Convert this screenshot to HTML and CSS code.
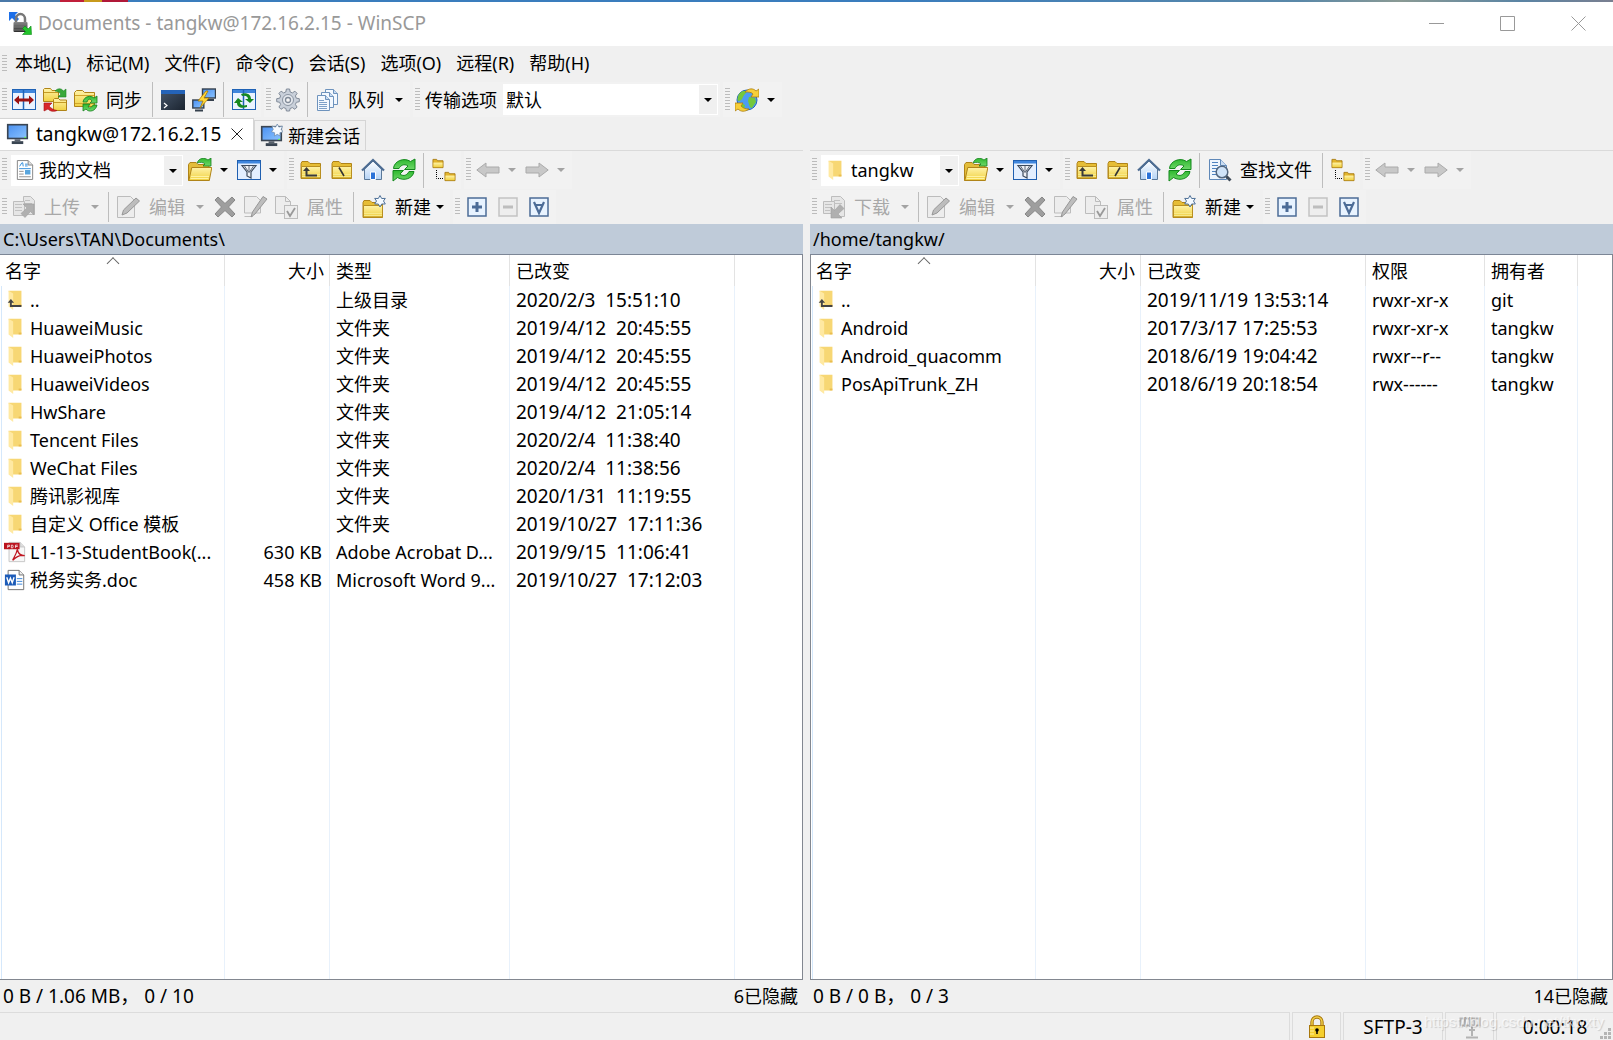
FILE: index.html
```html
<!DOCTYPE html>
<html lang="zh-CN">
<head>
<meta charset="utf-8">
<title>Documents - tangkw@172.16.2.15 - WinSCP</title>
<link rel="stylesheet" href="styles.css">
</head>
<body>
<svg class="sprite" width="0" height="0" aria-hidden="true">
  <defs>
    <linearGradient id="gold" x1="0" y1="0" x2="0" y2="1"><stop offset="0" stop-color="#fff3a8"/><stop offset="1" stop-color="#f0d040"/></linearGradient>
    <linearGradient id="screen" x1="0" y1="0" x2="1" y2="1"><stop offset="0" stop-color="#4a90f0"/><stop offset="1" stop-color="#8cc4ff"/></linearGradient>
    <linearGradient id="green" x1="0" y1="0" x2="0" y2="1"><stop offset="0" stop-color="#2eb82e"/><stop offset="1" stop-color="#6fd86a"/></linearGradient>
    <linearGradient id="metal" x1="0" y1="0" x2="0" y2="1"><stop offset="0" stop-color="#8a8a8a"/><stop offset="1" stop-color="#2b2b2b"/></linearGradient>
    <linearGradient id="wall" x1="0" y1="0" x2="0" y2="1"><stop offset="0" stop-color="#ffffff"/><stop offset="1" stop-color="#b5d3f5"/></linearGradient>
    <linearGradient id="term" x1="0" y1="0" x2="1" y2="1"><stop offset="0" stop-color="#46566a"/><stop offset="1" stop-color="#1b2430"/></linearGradient>
  </defs>
  <symbol id="i-folder" viewBox="0 0 24 24">
    <path d="M2 20.500V5.500l1-2h6l2 2h10.500v15z" fill="#e6bd35" stroke="#b08418"/>
    <path d="M2.500 8.500h19v11.500h-19z" fill="url(#gold)" stroke="#b98f20"/><path d="M3 16.500h18M3 18.500h18" stroke="#f7e98a"/>
  </symbol>
  <symbol id="i-small-folder" viewBox="0 0 12 12"><path d="M.5 10.500v-9h4l1 1.500h6v7.500z" fill="#e3b52c" stroke="#a87c12"/><path d="M1 5h10v5H1z" fill="url(#gold)"/></symbol>
  <symbol id="i-app" viewBox="0 0 24 24">
    <path d="M1 1h9L7 4l4 4-3 3-4-4-3 3z" fill="#1d6fe8"/>
    <path d="M8 12V8a4.500 5 0 0 1 9 0v4" fill="none" stroke="#777" stroke-width="2.500"/><rect x="5.500" y="11" width="14" height="10" rx="1" fill="url(#metal)"/><path d="M6 13h13M6 16h13M6 19h13" stroke="#777"/>
    <path d="M23.500 23.500h-9l3-3-3-3 2.500-2.500 3 3 3-3z" fill="#22c32b" stroke="#0d8a18" stroke-width=".6"/>
  </symbol>
  <symbol id="i-compare" viewBox="0 0 24 24">
    <rect x=".5" y="1.500" width="23" height="20" fill="#eaf3ff" stroke="#1f62b5"/><path d="M1 2h22v3H1z" fill="#3f86dd"/><path d="M11.500 2v19" stroke="#1f62b5" stroke-width="1.500"/>
    <path d="M2 12l5-4.500v3h10v-3l5 4.500-5 4.500v-3H7v3z" fill="#9c1212"/>
  </symbol>
  <symbol id="i-syncfolders" viewBox="0 0 24 24">
    <path d="M.5 13.500v-12l1-1h6l1.500 2h6.500v11z" fill="url(#gold)" stroke="#b08418"/><path d="M1 4.500h14" stroke="#c49a25"/>
    <path d="M10.500 22.500v-11l1-1h4l1.500 1.500h6.500v10.500z" fill="url(#gold)" stroke="#b08418"/><path d="M11 14.500h12" stroke="#c49a25"/>
    <path d="M12 3c3-3 6-3 8.500 0L23 1v8h-8l3-3c-2-2-4-3-6-3z" fill="#3aa83a" stroke="#1f8526" stroke-width=".6"/>
    <path d="M14 22.500c-3 1.500-7 1-9-1.500l-4 2v-8h8l-3 3c2 2 4 4 8 4.500z" fill="#d8262a" stroke="#a81216" stroke-width=".6"/>
  </symbol>
  <symbol id="i-syncrefresh" viewBox="0 0 24 24">
    <path d="M.5 18.500v-14l2-2h6l2 2h10v14z" fill="url(#gold)" stroke="#b08418"/><path d="M1 7.500h19M1 15.500h19" stroke="#d0a52c"/>
    <path d="M9 14c1-6 8-7 11-4l3-2v7h-7l2-2c-2-3-4-2-5 1z" fill="url(#green)" stroke="#168020" stroke-width=".8"/><path d="M23 17c-1 6-8 8-11 4l-3 2v-7h7l-2 3c2 2 4 0 5-2z" fill="url(#green)" stroke="#168020" stroke-width=".8"/>
  </symbol>
  <symbol id="i-terminal" viewBox="0 0 24 24"><rect y="2" width="24" height="20" fill="url(#term)"/><path d="M0 2h24v4H0z" fill="#2463b8"/><path d="M3 15l3 2.500-3 2.500" fill="none" stroke="#fff" stroke-width="1.200"/></symbol>
  <symbol id="i-putty" viewBox="0 0 24 24">
    <rect x="10.500" y="1" width="13" height="9" fill="url(#screen)" stroke="#35404d" stroke-width="1.400"/><path d="M15 12h7" stroke="#35404d" stroke-width="2"/>
    <rect x=".8" y="12" width="11" height="8" fill="url(#screen)" stroke="#35404d" stroke-width="1.400"/><path d="M3 22.500h8" stroke="#35404d" stroke-width="2"/>
    <path d="M14 3L6 13h5l-3 7 9-10h-5l4-7z" fill="#ffd83a" stroke="#a97800" stroke-width=".8"/>
  </symbol>
  <symbol id="i-syncbrowse" viewBox="0 0 24 24">
    <rect x=".5" y="1.500" width="23" height="20" fill="#eaf3ff" stroke="#1f62b5"/><path d="M1 2h22v3H1z" fill="#3f86dd"/><path d="M11.500 2v19" stroke="#1f62b5" stroke-width="1.500"/>
    <path d="M9 6c5-2 10 0 10 5h3l-4 4-5-4h3c0-2-2-4-6-3z" fill="#168820"/><path d="M15 19c-6 2-10 0-10-4H2l4-5 5 4H8c0 3 3 4 7 3z" fill="#168820"/>
  </symbol>
  <symbol id="i-gear" viewBox="0 0 24 24">
    <path d="M10.400 1h3.200l.6 3 2.200.9 2.500-1.700 2.200 2.200-1.700 2.500.9 2.300 3 .5v3l-3 .6-.9 2.200 1.700 2.500-2.200 2.300-2.500-1.700-2.300.9-.5 2.500h-3.200l-.5-2.500-2.300-.9L5 21.300 2.900 19l1.700-2.500-.9-2.200-3-.6v-3l3-.5.9-2.300-1.700-2.500 2.200-2.200 2.500 1.700 2.200-.9z" fill="#c9d0da" stroke="#808a98"/>
    <circle cx="12" cy="12" r="5.500" fill="#e4e8ee" stroke="#8a94a2"/><circle cx="12" cy="12" r="2.500" fill="#f5f5f5" stroke="#808a98" stroke-width="1.300"/>
  </symbol>
  <symbol id="i-queue" viewBox="0 0 24 24">
    <g fill="#f3f8fe" stroke="#6e93bd"><path d="M9.500 1.500h8l4 4v11h-12z"/><path d="M17.500 1.500v4h4" fill="#c5daf2"/><path d="M5.500 4.500h8l4 4v11h-12z"/><path d="M13.500 4.500v4h4" fill="#c5daf2"/><path d="M1.500 7.500h8l4 4v11h-12z"/><path d="M9.500 7.500v4h4" fill="#c5daf2"/></g>
    <path d="M3 12.500h5M3 14.500h8M3 16.500h8M3 18.500h8M3 20.500h8" stroke="#7da0c8"/>
  </symbol>
  <symbol id="i-globe" viewBox="0 0 24 24">
    <circle cx="12" cy="12" r="10" fill="#4d9cf2" stroke="#2468b8"/><path d="M4 6c3-4 6-3 8-3-1 3-3 3-4 6s-3 4-5 4c-1-2 0-5 1-7zM14 9l6 1 1 4-4 6c-3 0-3-5-4-7zM6 15l4 2-1 4-4-3z" fill="#74c83c"/>
    <path d="M10 4c4-4 8-4 11-1l3-2v8h-8l2-3c-2-2-4-2-8-2z" fill="#f7cf3a" stroke="#ad7f0d" stroke-width=".8"/><path d="M14 21c-4 3-8 3-11 0l-3 2v-8h8l-2 3c2 2 4 3 8 3z" fill="#f7cf3a" stroke="#ad7f0d" stroke-width=".8"/>
  </symbol>
  <symbol id="i-monitor" viewBox="0 0 24 24"><rect x="1.800" y="2.800" width="20.400" height="14.400" fill="url(#screen)" stroke="#3a4552" stroke-width="1.700"/><path d="M9 18h6v2H9z" fill="#59616c"/><path d="M6 21.500h12" stroke="#3a4552" stroke-width="3"/><path d="M19 16h2" stroke="#6f3" /></symbol>
  <symbol id="i-newmonitor" viewBox="0 0 24 24"><use href="#i-monitor"/><path d="M18 0l1.700 3.200 3.800-1-1.300 3.500L24 8l-3.300 1.200.3 3.300-3-1.700-3 1.700.3-3.300L12 8l1.800-2.300-1.300-3.500 3.800 1z" fill="#f5faff" stroke="#6f8cab" stroke-width=".8"/></symbol>
  <symbol id="i-openfolder" viewBox="0 0 24 24">
    <path d="M.5 22.500V6.500l1.500-2h6l2 2h11v16z" fill="#e3bd3a" stroke="#b08418"/><path d="M.8 22.500l3-13h20l-2.500 13z" fill="url(#gold)" stroke="#b08418"/><path d="M3 18.500h18M2.500 20.500h18" stroke="#fff3a0"/>
    <path d="M9 5c2-5 7-6 11-3l3-2v8h-8l2-2c-2-2-5-2-8-1z" fill="url(#green)" stroke="#168020" stroke-width=".8"/>
  </symbol>
  <symbol id="i-filter" viewBox="0 0 24 24"><rect x=".5" y="2.500" width="23" height="19" fill="#e3efff" stroke="#1f5fb0"/><path d="M1 3h22v2.500H1z" fill="#3f86dd"/><path d="M5 7.500h14l-5 6.500v6l-4-2v-4z" fill="#eef1f5" stroke="#3c4a5c" stroke-width="1.200"/><path d="M7.500 8l4 6M12 8v7M16.500 8l-4 6" stroke="#3c4a5c" stroke-width=".8"/></symbol>
  <symbol id="i-upfolder" viewBox="0 0 24 24"><use href="#i-folder"/><path d="M7.500 12v5.500H18" fill="none" stroke="#3a3a3a" stroke-width="2"/><path d="M4 13l3.500-4L11 13z" fill="#3a3a3a"/></symbol>
  <symbol id="i-rootlocal" viewBox="0 0 24 24"><use href="#i-folder"/><path d="M9 9.500l5 8.500" stroke="#333" stroke-width="1.600"/></symbol>
  <symbol id="i-rootremote" viewBox="0 0 24 24"><use href="#i-folder"/><path d="M14 9.500L9 18" stroke="#333" stroke-width="1.600"/></symbol>
  <symbol id="i-home" viewBox="0 0 24 24"><path d="M3.500 11L12 3l8.500 8v10.500h-17z" fill="url(#wall)" stroke="#5a7898"/><path d="M1 12.500L12 2l11 10.500" fill="none" stroke="#4d6c92" stroke-width="2.200"/><path d="M9.500 14h5v7.500h-5z" fill="#2a72d8" stroke="#fff"/></symbol>
  <symbol id="i-refresh" viewBox="0 0 24 24"><path d="M1.500 10.500C2 3 12-1 18.500 3.500L23 1v10.500H12.500l3.500-3.500c-4-3-8 0-9 2.500z" fill="url(#green)" stroke="#13881c"/><path d="M22 13.500c-1 7-10 10-16.500 6L1 23V12.500h10.500L8 16c4 3 7 1 9-2.500z" fill="url(#green)" stroke="#13881c"/></symbol>
  <symbol id="i-tree" viewBox="0 0 24 24"><use href="#i-small-folder" width="12" height="11"/><use href="#i-small-folder" x="12" y="13" width="12" height="11"/><path d="M4.500 12v8.500H12" fill="none" stroke="#000" stroke-dasharray="1 1"/></symbol>
  <symbol id="i-back" viewBox="0 0 24 24"><path d="M.8 12L10 5v4h13v6H10v4z" fill="#c8c8c8" stroke="#aaa"/></symbol>
  <symbol id="i-forward" viewBox="0 0 24 24"><path d="M23.200 12L14 5v4H1v6h13v4z" fill="#c8c8c8" stroke="#aaa"/></symbol>
  <symbol id="i-find" viewBox="0 0 24 24"><path d="M1.500 1.500h11l6 6v14h-17z" fill="#eef5fd" stroke="#5f88b8"/><path d="M12.500 1.500v6h6" fill="#c9dcf2" stroke="#5f88b8"/><path d="M4 4.500h6M4 7.500h6M4 10.500h5M4 13.500h4M4 16.500h5" stroke="#4f83c0"/><circle cx="14" cy="14" r="5.800" fill="#cfe3f8" stroke="#52667e" stroke-width="1.500"/><path d="M18.500 18.500l4 4" stroke="#3e4a58" stroke-width="3"/></symbol>
  <symbol id="i-upload" viewBox="0 0 24 24"><g fill="#e6e6e6" stroke="#bdbdbd"><path d="M11.500 1.500h7l4 4v14h-11z"/><path d="M1.500 6.500h11v14h-11z"/></g><path d="M3 9.500h7M3 12.500h7M3 15.500h7M13 5.500h5M13 8.500h7" stroke="#c2c2c2"/><path d="M22 9v11l-3.500-3.500L13 22.500l-4-4 6-5.500L11 9z" fill="#b0b0b0" stroke="#a0a0a0" stroke-width=".6"/></symbol>
  <symbol id="i-download" viewBox="0 0 24 24"><g fill="#e6e6e6" stroke="#bdbdbd"><path d="M9.500 1.500h9l4 4v16h-13z"/><path d="M1.500 6.500h11v12h-11z"/></g><path d="M3 9.500h7M3 12.500h7M3 15.500h5M12 5.500h6M12 8.500h8" stroke="#c2c2c2"/><path d="M9 23V12l3.500 3.500L18 9.500l4 4-6 5.500 4 4z" fill="#b0b0b0" stroke="#a0a0a0" stroke-width=".6"/></symbol>
  <symbol id="i-edit" viewBox="0 0 24 24"><path d="M.5 1.500h13l4 4v17H.500z" fill="#ededed" stroke="#bcbcbc"/><path d="M5 20l1.500-5L19 3l3.500 3L10 18z" fill="#bdbdbd" stroke="#979797"/></symbol>
  <symbol id="i-rename" viewBox="0 0 24 24"><path d="M.500 18V1.500h12l4 4V18zM.500 21.500H9" fill="#ededed" stroke="#bcbcbc"/><path d="M7 22l1.500-5L19 1.500l4 2.500L11 19z" fill="#bdbdbd" stroke="#979797"/></symbol>
  <symbol id="i-delete" viewBox="0 0 24 24"><path d="M5 2l7 6.500L19 2l3 3-6.500 7 6.500 7-3 3-7-6.500L5 22l-3-3 6.500-7L2 5z" fill="#9e9e9e" stroke="#878787"/></symbol>
  <symbol id="i-props" viewBox="0 0 24 24"><path d="M.5 1.500h10l5 5v12H.500z" fill="#ededed" stroke="#bcbcbc"/><path d="M10.500 1.500v5h5" fill="none" stroke="#bcbcbc"/><rect x="9.500" y="10.500" width="13" height="13" fill="#ededed" stroke="#bcbcbc"/><path d="M12 16l3 5 5-8" fill="none" stroke="#999" stroke-width="1.800"/></symbol>
  <symbol id="i-newfolder" viewBox="0 0 24 24"><use href="#i-folder" x="-1" y="2"/><path d="M18 .5l1.700 3 3.600-.1L21.500 6l1.800 3h-3.600L18 12l-1.700-3h-3.600l1.800-3-1.800-2.600 3.600.1z" fill="#f5faff" stroke="#4f7198"/></symbol>
  <symbol id="i-plus" viewBox="0 0 20 20"><rect x="1" y="1" width="18" height="18" fill="#e8f3ff" stroke="#4c6c97" stroke-width="1.500"/><path d="M10 5v10M5 10h10" stroke="#4c6c97" stroke-width="3"/></symbol>
  <symbol id="i-minus" viewBox="0 0 20 20"><rect x="1" y="1" width="18" height="18" fill="#eee" stroke="#c3c3c3" stroke-width="1.500"/><path d="M5 10h10" stroke="#bdbdbd" stroke-width="3"/></symbol>
  <symbol id="i-invert" viewBox="0 0 20 20"><rect x="1" y="1" width="18" height="18" fill="#e8f3ff" stroke="#4c6c97" stroke-width="1.500"/><path d="M5 5l5 11 5-11M6.500 8h7" fill="none" stroke="#4c6c97" stroke-width="2.200"/></symbol>
  <symbol id="i-docs" viewBox="0 0 20 24"><path d="M1.500 1.500h12l5 5v16h-17z" fill="#fff" stroke="#7d7d7d"/><path d="M13.500 1.500v5h5" fill="#ddd" stroke="#7d7d7d"/><path d="M4 8l2.500-4h1L8 8M10 5.500h3M10 7.500h3M3.500 10.500h13" fill="none" stroke="#2384d8"/><path d="M3.500 13.500h5M3.500 16.500h5M3.500 19.500h13" stroke="#888"/><rect x="10" y="12" width="6" height="5" fill="#58a5dd"/></symbol>
  <symbol id="i-dir" viewBox="0 0 16 24"><path d="M1 2h14v17H5z" fill="#f7d774"/><path d="M1 2l5 3v18l-5-4z" fill="#ffe9a2"/><path d="M12 17h3v2h-3z" fill="#e9bd50"/></symbol>
  <symbol id="i-dirup" viewBox="0 0 16 24"><use href="#i-dir"/><path d="M3.500 13v5.500H15" fill="none" stroke="#444" stroke-width="2"/><path d="M0 15l3.500-4L7 15z" fill="#444"/></symbol>
  <symbol id="i-pdf" viewBox="0 0 24 24"><path d="M5.500 1.500h12l5 5v16h-17z" fill="#f7f7f7" stroke="#c4c4c4"/><path d="M17.500 1.500v5h5" fill="#ddd" stroke="#c4c4c4"/><path d="M0 2h17v7H0z" fill="#bb1420"/><path d="M4 7.500v-3h2v1.500H4M8 4.500v3h1.500l.5-1.500-.5-1.500zM12.500 7.500v-3H15M12.500 6H15" fill="none" stroke="#fff" stroke-width=".8"/><path d="M9.500 21c1-3 4-6 5-12 1 5 4 7 8 7-4-1-8 0-13 5z" fill="none" stroke="#c01722" stroke-width="1.400"/></symbol>
  <symbol id="i-word" viewBox="0 0 24 24"><path d="M4.500 1.500h12l5 5v16h-17z" fill="#fff" stroke="#6b6b6b"/><path d="M16.500 1.500v5h5" fill="#eee" stroke="#6b6b6b"/><path d="M14 10.500h6M14 13.500h6M14 16.500h6" stroke="#2f7fd6"/><path d="M1 6h12v12H1z" fill="#1b5bb8"/><path d="M3 9l2 6 2-5 2 5 2-6" fill="none" stroke="#fff" stroke-width="1.500"/></symbol>
  <symbol id="i-lock" viewBox="0 0 18 24"><path d="M4 11V7a5 5 0 0 1 10 0v4" fill="none" stroke="#a9780c" stroke-width="3.400"/><path d="M4 11V7a5 5 0 0 1 10 0v4" fill="none" stroke="#f1cf4a" stroke-width="1.400"/><rect x="1.500" y="10.500" width="15" height="12" fill="#f5cf2e" stroke="#a9780c"/><path d="M2 13h4M2 16h4M2 19h4" stroke="#fff0a0"/><circle cx="9" cy="15" r="1.800"/><path d="M9 15v4" stroke="#000" stroke-width="1.500"/></symbol>
  <symbol id="i-zip" viewBox="0 0 22 24"><path d="M1.500 3.500h14v7h-14zM17 3.500h3.500v7H17M6 2v10M11 2v10M13 11v10M7 22.500h12M10 15h6" fill="none" stroke="#b3b3b3" stroke-width="2"/></symbol>
</svg>

<div class="desktop-strip"></div>
<header class="titlebar">
  <svg class="icon"><use href="#i-app"/></svg>
  <h1>Documents - tangkw@172.16.2.15 - WinSCP</h1>
  <button class="caption" aria-label="最小化"><svg viewBox="0 0 16 16"><path d="M0 7.500h15"/></svg></button>
  <button class="caption" aria-label="最大化"><svg viewBox="0 0 16 16"><path d="M.5.500h14v14H.500z"/></svg></button>
  <button class="caption" aria-label="关闭"><svg viewBox="0 0 16 16"><path d="M.5.500l14 14M14.500.500l-14 14"/></svg></button>
</header>

<nav class="menubar">
  <span class="grip"></span>
  <button>本地(L)</button><button>标记(M)</button><button>文件(F)</button><button>命令(C)</button><button>会话(S)</button><button>选项(O)</button><button>远程(R)</button><button>帮助(H)</button>
</nav>

<div class="toolbar main">
  <div class="group">
    <span class="grip"></span>
    <button class="tool" aria-label="比较目录"><svg class="icon"><use href="#i-compare"/></svg></button>
    <button class="tool" aria-label="同步目录"><svg class="icon"><use href="#i-syncfolders"/></svg></button>
    <button class="tool labelled"><svg class="icon"><use href="#i-syncrefresh"/></svg>同步</button>
    <span class="sep"></span>
    <button class="tool" aria-label="终端"><svg class="icon"><use href="#i-terminal"/></svg></button>
    <button class="tool" aria-label="PuTTY"><svg class="icon"><use href="#i-putty"/></svg></button>
    <span class="sep"></span>
    <button class="tool" aria-label="同步浏览"><svg class="icon"><use href="#i-syncbrowse"/></svg></button>
  </div>
  <div class="group">
    <span class="grip"></span>
    <button class="tool" aria-label="选项"><svg class="icon"><use href="#i-gear"/></svg></button>
    <span class="sep"></span>
    <button class="tool labelled"><svg class="icon"><use href="#i-queue"/></svg>队列</button>
    <button class="drop" aria-label="队列选项"></button>
  </div>
  <div class="group">
    <span class="grip"></span>
    <label for="preset">传输选项</label>
    <span class="combo preset"><select id="preset"><option>默认</option></select></span>
  </div>
  <div class="group">
    <span class="grip"></span>
    <button class="tool" aria-label="检查更新"><svg class="icon"><use href="#i-globe"/></svg></button>
    <button class="drop" aria-label="更新选项"></button>
  </div>
</div>

<div class="tabs">
  <div class="tab active"><svg class="icon"><use href="#i-monitor"/></svg><span>tangkw@172.16.2.15</span><button class="close" aria-label="关闭会话"><svg viewBox="0 0 12 12"><path d="M.5.500l11 11M11.500.500l-11 11"/></svg></button></div>
  <button class="tab"><svg class="icon"><use href="#i-newmonitor"/></svg><span>新建会话</span></button>
</div>

<main class="panes">
  <section class="pane">
    <div class="toolbar nav">
      <div class="group">
        <span class="grip"></span>
        <span class="combo dir local"><svg class="icon"><use href="#i-docs"/></svg><select aria-label="本地目录"><option>我的文档</option></select></span>
        <button class="tool" aria-label="打开目录"><svg class="icon"><use href="#i-openfolder"/></svg></button><button class="drop" aria-label="打开选项"></button>
        <button class="tool" aria-label="过滤器"><svg class="icon"><use href="#i-filter"/></svg></button><button class="drop" aria-label="过滤选项"></button>
      </div>
      <div class="group">
        <span class="grip"></span>
        <button class="tool" aria-label="上级目录"><svg class="icon"><use href="#i-upfolder"/></svg></button>
        <button class="tool" aria-label="根目录"><svg class="icon"><use href="#i-rootlocal"/></svg></button>
        <button class="tool" aria-label="主目录"><svg class="icon"><use href="#i-home"/></svg></button>
        <button class="tool" aria-label="刷新"><svg class="icon"><use href="#i-refresh"/></svg></button>
        <span class="sep"></span>
        <button class="tool" aria-label="目录树"><svg class="icon"><use href="#i-tree"/></svg></button>
      </div>
      <div class="group">
        <span class="grip"></span>
        <button class="tool" aria-label="后退" disabled><svg class="icon"><use href="#i-back"/></svg></button><button class="drop" aria-label="后退历史" disabled></button>
        <button class="tool" aria-label="前进" disabled><svg class="icon"><use href="#i-forward"/></svg></button><button class="drop" aria-label="前进历史" disabled></button>
      </div>
    </div>
    <div class="toolbar ops">
      <div class="group">
        <span class="grip"></span>
        <button class="tool labelled" disabled><svg class="icon"><use href="#i-upload"/></svg>上传</button><button class="drop" aria-label="上传选项" disabled></button>
        <span class="sep"></span>
        <button class="tool labelled" disabled><svg class="icon"><use href="#i-edit"/></svg>编辑</button><button class="drop" aria-label="编辑选项" disabled></button>
        <button class="tool" aria-label="删除" disabled><svg class="icon"><use href="#i-delete"/></svg></button>
        <button class="tool" aria-label="重命名" disabled><svg class="icon"><use href="#i-rename"/></svg></button>
        <button class="tool labelled" disabled><svg class="icon"><use href="#i-props"/></svg>属性</button>
        <span class="sep"></span>
        <button class="tool labelled menu"><svg class="icon"><use href="#i-newfolder"/></svg>新建<span class="caret"></span></button>
      </div>
      <div class="group">
        <span class="grip"></span>
        <button class="tool" aria-label="选择"><svg class="icon box"><use href="#i-plus"/></svg></button>
        <button class="tool" aria-label="取消选择" disabled><svg class="icon box"><use href="#i-minus"/></svg></button>
        <button class="tool" aria-label="反选"><svg class="icon box"><use href="#i-invert"/></svg></button>
      </div>
    </div>
    <div class="path">C:\Users\TAN\Documents\</div>
    <div class="list">
      <table>
        <colgroup><col class="c-name"><col class="c-size"><col class="c-type"><col class="c-date"><col></colgroup>
        <thead><tr><th class="sorted">名字</th><th class="num">大小</th><th>类型</th><th>已改变</th><th></th></tr></thead>
        <tbody>
          <tr><td><svg class="icon up"><use href="#i-dirup"/></svg>..</td><td></td><td>上级目录</td><td class="date">2020/2/3  15:51:10</td><td></td></tr>
          <tr><td><svg class="icon"><use href="#i-dir"/></svg>HuaweiMusic</td><td></td><td>文件夹</td><td class="date">2019/4/12  20:45:55</td><td></td></tr>
          <tr><td><svg class="icon"><use href="#i-dir"/></svg>HuaweiPhotos</td><td></td><td>文件夹</td><td class="date">2019/4/12  20:45:55</td><td></td></tr>
          <tr><td><svg class="icon"><use href="#i-dir"/></svg>HuaweiVideos</td><td></td><td>文件夹</td><td class="date">2019/4/12  20:45:55</td><td></td></tr>
          <tr><td><svg class="icon"><use href="#i-dir"/></svg>HwShare</td><td></td><td>文件夹</td><td class="date">2019/4/12  21:05:14</td><td></td></tr>
          <tr><td><svg class="icon"><use href="#i-dir"/></svg>Tencent Files</td><td></td><td>文件夹</td><td class="date">2020/2/4  11:38:40</td><td></td></tr>
          <tr><td><svg class="icon"><use href="#i-dir"/></svg>WeChat Files</td><td></td><td>文件夹</td><td class="date">2020/2/4  11:38:56</td><td></td></tr>
          <tr><td><svg class="icon"><use href="#i-dir"/></svg>腾讯影视库</td><td></td><td>文件夹</td><td class="date">2020/1/31  11:19:55</td><td></td></tr>
          <tr><td><svg class="icon"><use href="#i-dir"/></svg>自定义 Office 模板</td><td></td><td>文件夹</td><td class="date">2019/10/27  17:11:36</td><td></td></tr>
          <tr><td><svg class="icon"><use href="#i-pdf"/></svg>L1-13-StudentBook(...</td><td class="num">630 KB</td><td>Adobe Acrobat D...</td><td class="date">2019/9/15  11:06:41</td><td></td></tr>
          <tr><td><svg class="icon"><use href="#i-word"/></svg>税务实务.doc</td><td class="num">458 KB</td><td>Microsoft Word 9...</td><td class="date">2019/10/27  17:12:03</td><td></td></tr>
          <tr class="rest"><td></td><td></td><td></td><td></td><td></td></tr>
        </tbody>
      </table>
    </div>
    <footer class="summary"><span class="count">0 B / 1.06 MB， 0 / 10</span><span>6已隐藏</span></footer>
  </section>

  <section class="pane">
    <div class="toolbar nav">
      <div class="group">
        <span class="grip"></span>
        <span class="combo dir remote"><svg class="icon"><use href="#i-dir"/></svg><select aria-label="远程目录"><option>tangkw</option></select></span>
        <button class="tool" aria-label="打开目录"><svg class="icon"><use href="#i-openfolder"/></svg></button><button class="drop" aria-label="打开选项"></button>
        <button class="tool" aria-label="过滤器"><svg class="icon"><use href="#i-filter"/></svg></button><button class="drop" aria-label="过滤选项"></button>
      </div>
      <div class="group">
        <span class="grip"></span>
        <button class="tool" aria-label="上级目录"><svg class="icon"><use href="#i-upfolder"/></svg></button>
        <button class="tool" aria-label="根目录"><svg class="icon"><use href="#i-rootremote"/></svg></button>
        <button class="tool" aria-label="主目录"><svg class="icon"><use href="#i-home"/></svg></button>
        <button class="tool" aria-label="刷新"><svg class="icon"><use href="#i-refresh"/></svg></button>
        <span class="sep"></span>
        <button class="tool labelled"><svg class="icon"><use href="#i-find"/></svg>查找文件</button>
        <span class="sep"></span>
        <button class="tool" aria-label="目录树"><svg class="icon"><use href="#i-tree"/></svg></button>
      </div>
      <div class="group">
        <span class="grip"></span>
        <button class="tool" aria-label="后退" disabled><svg class="icon"><use href="#i-back"/></svg></button><button class="drop" aria-label="后退历史" disabled></button>
        <button class="tool" aria-label="前进" disabled><svg class="icon"><use href="#i-forward"/></svg></button><button class="drop" aria-label="前进历史" disabled></button>
      </div>
    </div>
    <div class="toolbar ops">
      <div class="group">
        <span class="grip"></span>
        <button class="tool labelled" disabled><svg class="icon"><use href="#i-download"/></svg>下载</button><button class="drop" aria-label="下载选项" disabled></button>
        <span class="sep"></span>
        <button class="tool labelled" disabled><svg class="icon"><use href="#i-edit"/></svg>编辑</button><button class="drop" aria-label="编辑选项" disabled></button>
        <button class="tool" aria-label="删除" disabled><svg class="icon"><use href="#i-delete"/></svg></button>
        <button class="tool" aria-label="重命名" disabled><svg class="icon"><use href="#i-rename"/></svg></button>
        <button class="tool labelled" disabled><svg class="icon"><use href="#i-props"/></svg>属性</button>
        <span class="sep"></span>
        <button class="tool labelled menu"><svg class="icon"><use href="#i-newfolder"/></svg>新建<span class="caret"></span></button>
      </div>
      <div class="group">
        <span class="grip"></span>
        <button class="tool" aria-label="选择"><svg class="icon box"><use href="#i-plus"/></svg></button>
        <button class="tool" aria-label="取消选择" disabled><svg class="icon box"><use href="#i-minus"/></svg></button>
        <button class="tool" aria-label="反选"><svg class="icon box"><use href="#i-invert"/></svg></button>
      </div>
    </div>
    <div class="path">/home/tangkw/</div>
    <div class="list">
      <table>
        <colgroup><col class="c-name"><col class="c-size"><col class="c-date"><col class="c-perm"><col class="c-owner"><col></colgroup>
        <thead><tr><th class="sorted">名字</th><th class="num">大小</th><th>已改变</th><th>权限</th><th>拥有者</th><th></th></tr></thead>
        <tbody>
          <tr><td><svg class="icon up"><use href="#i-dirup"/></svg>..</td><td></td><td class="date">2019/11/19 13:53:14</td><td>rwxr-xr-x</td><td>git</td><td></td></tr>
          <tr><td><svg class="icon"><use href="#i-dir"/></svg>Android</td><td></td><td class="date">2017/3/17 17:25:53</td><td>rwxr-xr-x</td><td>tangkw</td><td></td></tr>
          <tr><td><svg class="icon"><use href="#i-dir"/></svg>Android_quacomm</td><td></td><td class="date">2018/6/19 19:04:42</td><td>rwxr--r--</td><td>tangkw</td><td></td></tr>
          <tr><td><svg class="icon"><use href="#i-dir"/></svg>PosApiTrunk_ZH</td><td></td><td class="date">2018/6/19 20:18:54</td><td>rwx------</td><td>tangkw</td><td></td></tr>
          <tr class="rest"><td></td><td></td><td></td><td></td><td></td><td></td></tr>
        </tbody>
      </table>
    </div>
    <footer class="summary"><span class="count">0 B / 0 B， 0 / 3</span><span>14已隐藏</span></footer>
  </section>
</main>

<footer class="statusbar">
  <div class="cell wide"></div>
  <div class="cell small"><svg class="icon lock"><use href="#i-lock"/></svg></div>
  <div class="cell proto">SFTP-3</div>
  <div class="cell small"><svg class="icon"><use href="#i-zip"/></svg></div>
  <div class="cell time">0:00:18</div>
  <span class="watermark">https://blog.csdn.net/tkwxty</span>
  <svg class="sizegrip" viewBox="0 0 12 12"><path d="M8 0h3v3H8zM8 4h3v3H8zM8 8h3v3H8zM4 4h3v3H4zM4 8h3v3H4zM0 8h3v3H0z" fill="#b5b5b5"/></svg>
</footer>
</body>
</html>
```

FILE: styles.css
```css
* { box-sizing: border-box; }

body {
  margin: 0;
  height: 100vh;
  display: flex;
  flex-direction: column;
  overflow: hidden;
  background: #f0f0f0;
  color: #000;
  font: 18px/28px "Noto Sans", "Noto Sans CJK SC", sans-serif;
}

button, select {
  margin: 0;
  padding: 0;
  border: 0;
  background: transparent;
  color: inherit;
  font: inherit;
}

.sprite { position: absolute; }
.icon { flex: none; width: 24px; height: 24px; display: block; }

.desktop-strip {
  flex: none;
  height: 2px;
  background: linear-gradient(90deg, #4a78a8 60px, #c01f3a 60px 84px, #c89a1c 84px 102px, #b01838 102px 128px, #3a7dbd 128px 900px, #5a88a8 1300px, #8a9a94 1400px, #5a84a4 1520px, #7a7f90);
}

.titlebar { flex: none; height: 44px; display: flex; align-items: center; padding: 0 2px 2px 8px; gap: 6px; background: #fff; }
.titlebar h1 { flex: 1; margin: 0; color: #999; font-size: 19px; font-weight: 400; }
.caption { width: 65px; height: 42px; padding-top: 1px; display: flex; align-items: center; justify-content: center; }
.caption svg { width: 16px; height: 16px; fill: none; stroke: #999; }

.menubar { flex: none; height: 36px; display: flex; align-items: center; gap: 1px; padding: 0 0 2px 2px; }
.menubar button { padding: 0 7px; }
.menubar .grip { height: 16px; margin-right: 0; }

.grip {
  flex: none;
  width: 5px;
  height: 24px;
  margin-right: 1px;
  background: repeating-linear-gradient(#bcbcbc 0 1px, transparent 1px 3px);
}

.toolbar { flex: none; display: flex; gap: 3px; }
.toolbar.main { height: 35px; }
.toolbar.nav { height: 39px; border-top: 1px solid #dadada; }
.toolbar.ops { height: 34px; margin-top: 1px; }
.toolbar.ops .grip { height: 18px; }
.group { display: flex; align-items: center; padding: 0 2px; background: #f2f2f2; }
.tool { flex: none; width: 31px; height: 30px; display: flex; align-items: center; justify-content: center; white-space: nowrap; }
.tool.labelled { width: auto; padding: 0 6px 0 4px; gap: 8px; }
.tool:disabled { color: #a8a8a8; }
.icon.box { width: 20px; height: 20px; }
.sep { flex: none; width: 1px; height: 35px; margin: 0 4px; background: #bdbdbd; }
.ops .sep { height: 30px; }
.drop { flex: none; width: 18px; height: 30px; display: flex; align-items: center; justify-content: center; }
.drop::before, .caret, .combo::after {
  content: "";
  width: 0;
  height: 0;
  border: 4px solid transparent;
  border-top-color: #000;
  border-bottom: 0;
}
.drop:disabled::before { border-top-color: #a3a3a3; }
.tool.menu { gap: 5px; padding-right: 4px; }
.tool.menu .icon { margin-right: 4px; }

.group label { margin: 0 6px 0 4px; }
.combo { flex: none; height: 31px; display: flex; align-items: center; position: relative; background: #fff; }
.combo select { flex: 1; min-width: 0; height: 31px; appearance: none; }
.combo::before { content: ""; position: absolute; top: 1px; right: 1px; bottom: 1px; width: 18px; background: #f0f0f0; }
.combo::after { position: absolute; right: 6px; top: 14px; }
.combo.preset { width: 215px; padding-left: 3px; }
.combo.dir { margin: 0 1px 0 3px; padding-left: 5px; gap: 5px; }
.combo.local { width: 172px; }
.combo.remote { width: 138px; gap: 7px; }
.combo.dir .icon { width: 18px; height: 22px; }

.tabs { flex: none; height: 32px; display: flex; align-items: flex-end; margin-top: 1px; }
.tab { height: 30px; display: flex; align-items: center; gap: 5px; padding: 0 5px; border: 1px solid #d5d5d5; border-bottom: 0; }
.tab .icon { width: 23px; height: 23px; }
.tab.active { height: 32px; gap: 7px; padding: 0 10px 2px 6px; border-left: 0; background: #fff; font-size: 19px; }
.close { width: 12px; height: 12px; margin-left: 3px; display: flex; }
.close svg { width: 12px; height: 12px; fill: none; stroke: #222; }

.panes { flex: 1; min-height: 0; display: grid; grid-template-columns: minmax(0, 1fr) minmax(0, 1fr); gap: 7px; }
.pane { display: flex; flex-direction: column; min-width: 0; min-height: 0; }
.path { flex: none; height: 30px; padding: 1px 3px; background: #bfcbd9; }

.list { flex: 1; min-height: 0; border: 1px solid #828790; border-top-color: #7c8696; background: #fff; padding-left: 1px; }
.pane:first-child .list { border-left: 0; }
table { width: 100%; height: 100%; border-collapse: separate; border-spacing: 0; table-layout: fixed; }
.c-name { width: 224px; }
.c-size { width: 105px; }
.c-type { width: 180px; }
.c-date { width: 225px; }
.c-perm { width: 119px; }
.c-owner { width: 93px; }
th, td { height: 28px; padding: 0 0 0 6px; border-right: 1px solid #e8f1fb; font-weight: 400; text-align: left; white-space: nowrap; overflow: hidden; }
th { height: 31px; border-color: #e3e3e3; padding-top: 1px; }
th:last-child, td:last-child { border-right: 0; }
td:first-child { border-left: 1px solid #d5e8fb; padding-left: 2px; }
th:first-child { padding-left: 4px; }
th.num { padding-right: 5px; text-align: right; }
td.num { padding-right: 7px; text-align: right; }
td .icon { display: inline-block; width: 22px; height: 22px; margin-right: 4px; vertical-align: -4px; }
td.date { white-space: pre; font-size: 19px; }
.rest td { height: auto; }
.sorted { position: relative; }
.sorted::after { content: ""; position: absolute; left: 50%; top: 4px; width: 8px; height: 8px; border: solid #666; border-width: 1px 0 0 1px; transform: translateX(-50%) rotate(45deg); }

.summary { flex: none; height: 32px; display: flex; align-items: center; justify-content: space-between; padding: 0 5px 0 3px; }
.summary span { white-space: pre; }
.summary .count { font-size: 19px; }

.statusbar { flex: none; height: 28px; display: flex; gap: 2px; position: relative; font-size: 19px; }
.cell { display: flex; align-items: center; justify-content: center; border: 1px solid #dcdcdc; border-width: 1px 1px 0; }
.cell.wide { flex: 1; border-left: 0; }
.cell.small { width: 49px; }
.cell.proto { width: 100px; }
.cell.time { width: 117px; border-right: 0; }
.cell .lock { width: 18px; }
.watermark { position: absolute; right: 9px; top: -4px; color: rgba(255, 255, 255, 0.65); font: 15px/28px "Liberation Sans", sans-serif; text-shadow: 1px 1px 1px rgba(0, 0, 0, 0.15); }
.sizegrip { position: absolute; right: 1px; bottom: 0; width: 12px; height: 12px; }
```
